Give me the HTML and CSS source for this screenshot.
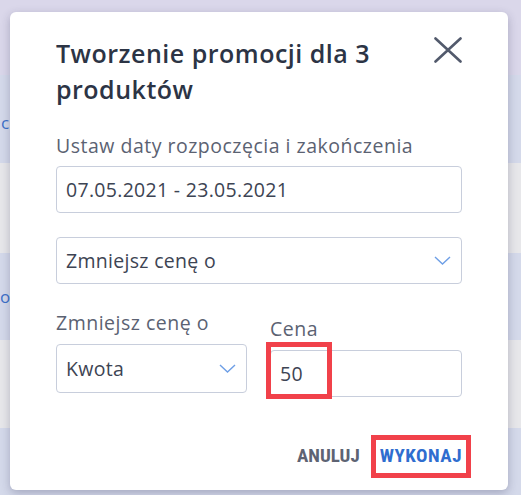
FILE: index.html
```html
<!DOCTYPE html>
<html lang="pl">
<head>
<meta charset="utf-8">
<title>Tworzenie promocji</title>
<link rel="stylesheet" href="styles.css">
</head>
<body>
<div class="page">
  <div class="topbar"></div>
  <div class="bg-row bg-blue"><span class="bg-link">c</span></div>
  <div class="bg-row bg-gray bg-h90"></div>
  <div class="bg-row bg-blue bg-h87"><span class="bg-link bg-link-o">o</span></div>
  <div class="bg-row bg-gray"></div>
  <div class="bg-row bg-blue bg-last"></div>
</div>

<div class="modal">
  <div class="modal-header">
    <h2 class="modal-title">Tworzenie promocji dla 3<br>produktów</h2>
    <button class="close-btn" aria-label="Zamknij">
      <svg width="28" height="26" viewBox="0 0 28 26"><path d="M1.5 1.5 L26.5 24.5 M26.5 1.5 L1.5 24.5" stroke="#525a6c" stroke-width="2.6" fill="none" stroke-linecap="round"/></svg>
    </button>
  </div>

  <div class="label label-main">Ustaw daty rozpoczęcia i zakończenia</div>
  <div class="field field-date">07.05.2021 - 23.05.2021</div>

  <div class="field field-select field-select-main">
    <span>Zmniejsz cenę o</span>
    <svg class="chevron" width="17" height="9" viewBox="0 0 17 9"><path d="M1 1 L8.5 8 L16 1" stroke="#6e9fe6" stroke-width="1.4" fill="none"/></svg>
  </div>

  <div class="two-col">
    <div class="col">
      <div class="label">Zmniejsz cenę o</div>
      <div class="field field-select field-kwota">
        <span>Kwota</span>
        <svg class="chevron" width="17" height="9" viewBox="0 0 17 9"><path d="M1 1 L8.5 8 L16 1" stroke="#6e9fe6" stroke-width="1.4" fill="none"/></svg>
      </div>
    </div>
    <div class="col col-right">
      <div class="label">Cena</div>
      <div class="field field-price">
        <span>50</span>
        <div class="highlight highlight-price"></div>
      </div>
    </div>
  </div>

  <div class="actions">
    <button class="action action-cancel">ANULUJ</button>
    <button class="action action-ok">WYKONAJ<span class="highlight highlight-ok"></span></button>
  </div>
</div>
</body>
</html>
```
FILE: styles.css
```css
html, body {
  margin: 0;
  padding: 0;
}
body {
  width: 521px;
  height: 495px;
  overflow: hidden;
  position: relative;
  font-family: "Open Sans", "Noto Sans", "Liberation Sans", sans-serif;
}

/* background page */
.page {
  display: flex;
  flex-direction: column;
  height: 495px;
}
.topbar {
  height: 75px;
  background: #dad7ea;
}
.bg-row {
  height: 88px;
  display: flex;
  align-items: center;
}
.bg-h90 { height: 90px; }
.bg-h87 { height: 87px; }
.bg-last { flex: 1; }
.bg-blue { background: #d4d9ea; }
.bg-gray { background: #e7e7ea; }
.bg-link {
  color: #3d70c8;
  font-size: 17px;
  padding-left: 1px;
  margin-top: 6px;
}
.bg-link-o {
  padding-left: 0;
  margin-top: 0;
}

/* modal */
.modal {
  position: absolute;
  left: 10px;
  top: 12px;
  width: 498px;
  height: 478px;
  box-sizing: border-box;
  padding: 23px 46px 0 46px;
  background: #fff;
  border-radius: 6px;
  box-shadow: 0 3px 10px rgba(40, 40, 80, 0.28);
}
.modal-header {
  display: flex;
  justify-content: space-between;
  align-items: flex-start;
}
.modal-title {
  margin: 0;
  font-size: 25px;
  line-height: 36px;
  font-weight: 600;
  letter-spacing: 0.5px;
  color: #2c3445;
}
.close-btn {
  margin: 2px 0 0 0;
  padding: 0;
  border: 0;
  background: none;
  width: 28px;
  height: 26px;
  display: block;
}
.close-btn svg { display: block; }

.label {
  font-size: 19.5px;
  line-height: 24px;
  letter-spacing: 0.5px;
  color: #5b6272;
}
.label-main {
  margin-top: 27px;
}

.field {
  box-sizing: border-box;
  border: 1px solid #c8cedc;
  border-radius: 4px;
  padding: 0 9px;
  font-size: 19.5px;
  line-height: 24px;
  letter-spacing: 0.3px;
  color: #3d4453;
  display: flex;
  align-items: center;
  justify-content: space-between;
}
.field-date {
  margin-top: 8px;
  height: 47px;
}
.field-select-main {
  margin-top: 24px;
  height: 47px;
  padding-right: 10px;
}
.chevron { display: block; }

.two-col {
  margin-top: 27px;
  display: grid;
  grid-template-columns: 191px 192px;
  column-gap: 23px;
  align-items: start;
}
.col-right {
  margin-top: 6px;
}
.col .field {
  margin-top: 9px;
}
.field-kwota {
  height: 49px;
  padding-right: 10px;
}
.field-price {
  height: 47px;
  position: relative;
}

.highlight {
  position: absolute;
  border: 5px solid #f1414a;
  box-sizing: border-box;
  pointer-events: none;
}
.highlight-price {
  left: -5px;
  top: -9px;
  width: 66px;
  height: 57px;
}

.actions {
  margin-top: 47px;
  display: flex;
  justify-content: flex-end;
  gap: 20px;
}
.action {
  position: relative;
  border: 0;
  background: none;
  padding: 0;
  margin: 0;
  font-family: "Liberation Sans Narrow", "Roboto Condensed", "Liberation Sans", sans-serif;
  font-weight: 700;
  font-size: 19px;
  line-height: 24px;
}
.action-cancel { color: #5d6373; }
.action-ok { color: #2f6dcf; letter-spacing: 0.5px; }
.highlight-ok {
  left: -9px;
  top: -9px;
  right: -9px;
  bottom: -10px;
}
```
